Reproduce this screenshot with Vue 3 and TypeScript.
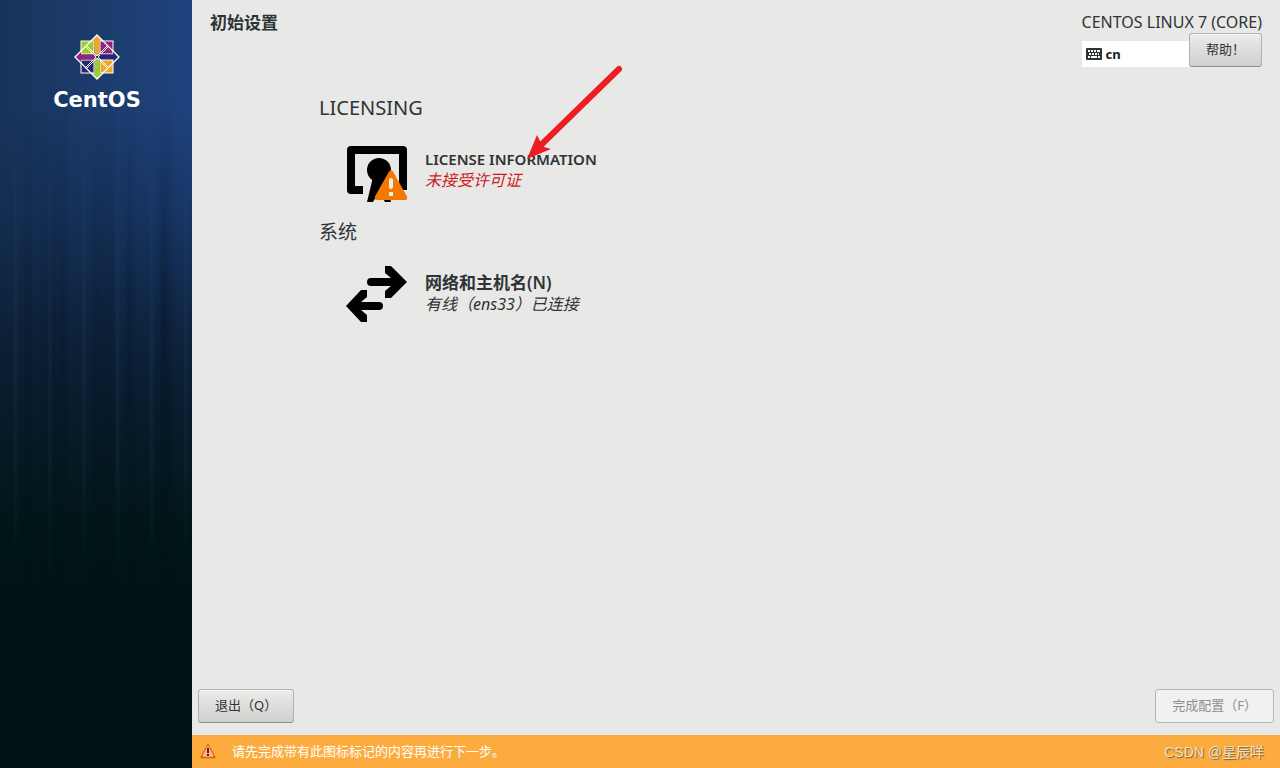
<script setup lang="ts">
interface Spoke {
  id: string
  lang: string
  title: string
  status: string
  alert: boolean
}
interface Category {
  name: string
  lang: string
  spokes: Spoke[]
}

const categories: Category[] = [
  {
    name: 'LICENSING',
    lang: 'en',
    spokes: [{ id: 'license', lang: 'en', title: 'LICENSE INFORMATION', status: '未接受许可证', alert: true }],
  },
  {
    name: '系统',
    lang: 'zh-CN',
    spokes: [{ id: 'network', lang: 'zh-CN', title: '网络和主机名(N)', status: '有线（ens33）已连接', alert: false }],
  },
]

const quadrants = [
  { turn: 0, box: '#9ccd2a', arrow: '#efa724' },
  { turn: 90, box: '#932279', arrow: '#262577' },
  { turn: 180, box: '#efa724', arrow: '#9ccd2a' },
  { turn: 270, box: '#262577', arrow: '#932279' },
]
</script>

<template>
  <div class="setup">
    <aside class="sidebar">
      <div class="brand">
        <svg class="emblem" viewBox="-23 -23 46 46" aria-hidden="true">
          <g v-for="q in quadrants" :key="q.turn" :transform="`rotate(${q.turn})`">
            <rect x="-16" y="-16" width="13" height="13" :fill="q.box" stroke="#fff" />
            <path d="M0-22L6-16H2.400V-3L0-1L-2.400-3V-16H-6Z" :fill="q.arrow" />
            <path d="M-16-6L-11.500-10.500L-3-2M-6-16L-10.500-11.500L-3-4" fill="none" stroke="#fff" />
          </g>
          <path d="M0-22L22 0L0 22L-22 0Z" fill="none" stroke="#fff" stroke-width="1.300" />
          <path d="M-2.500-2.500L2.500 2.500M2.500-2.500L-2.500 2.500" stroke="#fff" stroke-width="2" />
          <path d="M-1.500-1.500L1.500 1.500M1.500-1.500L-1.500 1.500" stroke="#1d3a6b" />
        </svg>
        <span class="wordmark">CentOS</span>
      </div>
    </aside>

    <div class="main">
      <header class="top">
        <h1>初始设置</h1>
        <div class="product">
          <span class="distro">CENTOS LINUX 7 (CORE)</span>
          <div class="tools">
            <div class="layout">
              <svg width="16" height="12" viewBox="0 0 16 12" aria-hidden="true">
                <rect width="16" height="12" rx="1" fill="#2e3436" />
                <path d="M2 3h2M5 3h2M8 3h2M11 3h3M3 6h2M6 6h2M9 6h2M12 6h1M2 9h2M5 9h6M12 9h2" stroke="#fff" stroke-width="2" />
              </svg>
              <span>cn</span>
            </div>
            <button type="button" class="help">帮助！</button>
          </div>
        </div>
      </header>

      <main class="hub">
        <section v-for="category in categories" :key="category.name">
          <h2 :lang="category.lang">{{ category.name }}</h2>
          <button v-for="spoke in category.spokes" :key="spoke.id" type="button" class="spoke">
            <svg v-if="spoke.id === 'license'" width="64" height="64" viewBox="0 0 64 64" aria-hidden="true">
              <path d="M18 48H6V8H58V48" fill="none" stroke="#000" stroke-width="8" stroke-linejoin="round" />
              <circle cx="34" cy="28" r="12" />
              <path d="M28 35L22 60H28L34 50L40 60H46L40 35Z" />
              <path d="M48 29.500L62 54.500Q63 58 60 58H32Q29 58 30 54.500L44 29.500Q46 27 48 29.500Z" fill="#f57900" />
              <path d="M46 38V45" stroke="#eeeeec" stroke-width="4" stroke-linecap="round" />
              <path d="M46 50V54" stroke="#eeeeec" stroke-width="4" />
            </svg>
            <svg v-else width="64" height="64" viewBox="0 0 64 64" aria-hidden="true">
              <path d="M26 12H46L40 7V0H46L62 16L46 32H40V25L46 20H26a4 4 0 0 1 0-8Z" />
              <path d="M34 36H16L22 31V24H16L1 40L16 56H22V49L16 44H34a4 4 0 0 0 0-8Z" />
            </svg>
            <span class="text">
              <span class="title" :lang="spoke.lang">{{ spoke.title }}</span>
              <span class="status" :class="{ alert: spoke.alert }">{{ spoke.status }}</span>
            </span>
          </button>
        </section>
      </main>

      <footer class="actions">
        <button type="button">退出（Q）</button>
        <button type="button" disabled>完成配置（F）</button>
      </footer>

      <div class="notice" role="status">
        <svg width="16" height="16" viewBox="0 0 16 16" aria-hidden="true">
          <path d="M8 1.500L15 14.500H1Z" fill="#f08a30" stroke="#d9660a" stroke-linejoin="round" stroke-width="1.500" />
          <path d="M8 3.500L13 13H3Z" fill="#f9b070" stroke="#fbc795" />
          <path d="M8 5V10M8 11V13" stroke="#333" stroke-width="2" />
        </svg>
        <span class="message">请先完成带有此图标标记的内容再进行下一步。</span>
        <span class="credit">CSDN @星辰咩</span>
      </div>
    </div>

    <svg class="pointer" width="100" height="98" viewBox="0 0 100 98" aria-hidden="true">
      <path d="M94 6L16 82" stroke="#ee1c25" stroke-width="6" stroke-linecap="round" />
      <path d="M2 96L12 72L16 80L19 84L26 86Z" fill="#ee1c25" />
    </svg>
  </div>
</template>

<style>
body {
  margin: 0;
}
</style>

<style scoped>
.setup {
  position: relative;
  display: flex;
  min-height: 100vh;
  background: #e8e8e6;
  color: #2e3436;
  font-family: "Noto Sans", "Noto Sans CJK SC", sans-serif;
}
.sidebar {
  position: relative;
  flex: 0 0 15%;
  background:
    linear-gradient(180deg, transparent 14%, rgba(10, 32, 62, 0.35) 27%, rgba(9, 27, 46, 0.75) 42%, rgba(5, 24, 36, 0.9) 54%, #021619 68%, #001418 78%),
    linear-gradient(90deg, #19345a, #1f437e);
}
.sidebar::before {
  content: "";
  position: absolute;
  inset: 0;
  background:
    repeating-linear-gradient(90deg, transparent 0 13px, rgba(90, 130, 150, 0.08) 15px 16px, transparent 19px 23px, rgba(0, 10, 20, 0.14) 26px 30px, transparent 34px),
    repeating-linear-gradient(90deg, transparent 0 40px, rgba(0, 10, 20, 0.12) 46px 54px, transparent 58px);
  mask-image: linear-gradient(180deg, transparent 12%, #000 40%, #000 60%, transparent 76%);
}
.brand {
  display: flex;
  flex-direction: column;
  align-items: center;
  padding: 34px 0 0 2px;
}
.emblem {
  width: 46px;
  height: 46px;
}
.wordmark {
  margin-top: 8px;
  color: #fff;
  font: bold 21px/24px "DejaVu Sans", sans-serif;
}
.main {
  flex: 1;
  display: flex;
  flex-direction: column;
  min-width: 0;
}
.top {
  display: flex;
  justify-content: space-between;
  align-items: flex-start;
  padding: 12px 18px 0;
}
h1 {
  margin: 0;
  font-size: 17px;
  line-height: 21px;
}
.product {
  display: flex;
  flex-direction: column;
}
.distro {
  font-size: 16px;
  line-height: 21px;
}
.tools {
  display: flex;
  align-items: flex-end;
}
.layout {
  flex: 1;
  display: flex;
  align-items: center;
  gap: 4px;
  height: 26px;
  padding: 0 4px;
  box-sizing: border-box;
  background: #fff;
  color: #1a1c1d;
  font-size: 13px;
  font-weight: bold;
}
button {
  font-family: inherit;
  color: inherit;
}
.help,
.actions button {
  height: 34px;
  padding: 0 16px 2px;
  border: 1px solid #b0b0ae;
  border-bottom-color: #929290;
  border-radius: 3px;
  background: linear-gradient(#ebebea, #d0d0ce);
  box-shadow: inset 0 1px #f8f8f8;
  font-size: 13px;
  line-height: 20px;
}
.actions button:disabled {
  border-color: #b6b6b4;
  background: #f1f1f1;
  color: #8d9091;
  box-shadow: none;
}
.hub {
  flex: 1;
  padding: 27px 18px 0 127px;
}
h2 {
  margin: 0;
  font-size: 20px;
  font-weight: normal;
  line-height: 28px;
}
h2:lang(zh) {
  font-size: 19px;
}
.spoke {
  display: flex;
  align-items: center;
  gap: 16px;
  margin: 20px 0 12px;
  padding: 0 0 0 26px;
  border: 0;
  background: none;
  text-align: left;
}
.text {
  display: flex;
  flex-direction: column;
  padding-bottom: 10px;
}
.title {
  font-size: 15px;
  font-weight: 600;
  line-height: 22px;
}
.title:lang(zh) {
  font-size: 17px;
}
.status {
  font-size: 16px;
  font-style: italic;
  line-height: 20px;
}
.alert {
  color: #cc1a1f;
}
.actions {
  display: flex;
  justify-content: space-between;
  padding: 0 6px 12px;
}
.notice {
  display: flex;
  align-items: center;
  gap: 16px;
  height: 31px;
  padding: 0 16px 2px 8px;
  background: #fcac3e;
  color: #fff;
  font-size: 13px;
}
.credit {
  margin-left: auto;
  color: #eee0c8;
  font: 14px "Liberation Sans", "Noto Sans CJK SC", sans-serif;
  text-shadow: 1px 1px 1px #80602e;
}
.pointer {
  position: absolute;
  left: 525px;
  top: 63px;
  pointer-events: none;
}
</style>
